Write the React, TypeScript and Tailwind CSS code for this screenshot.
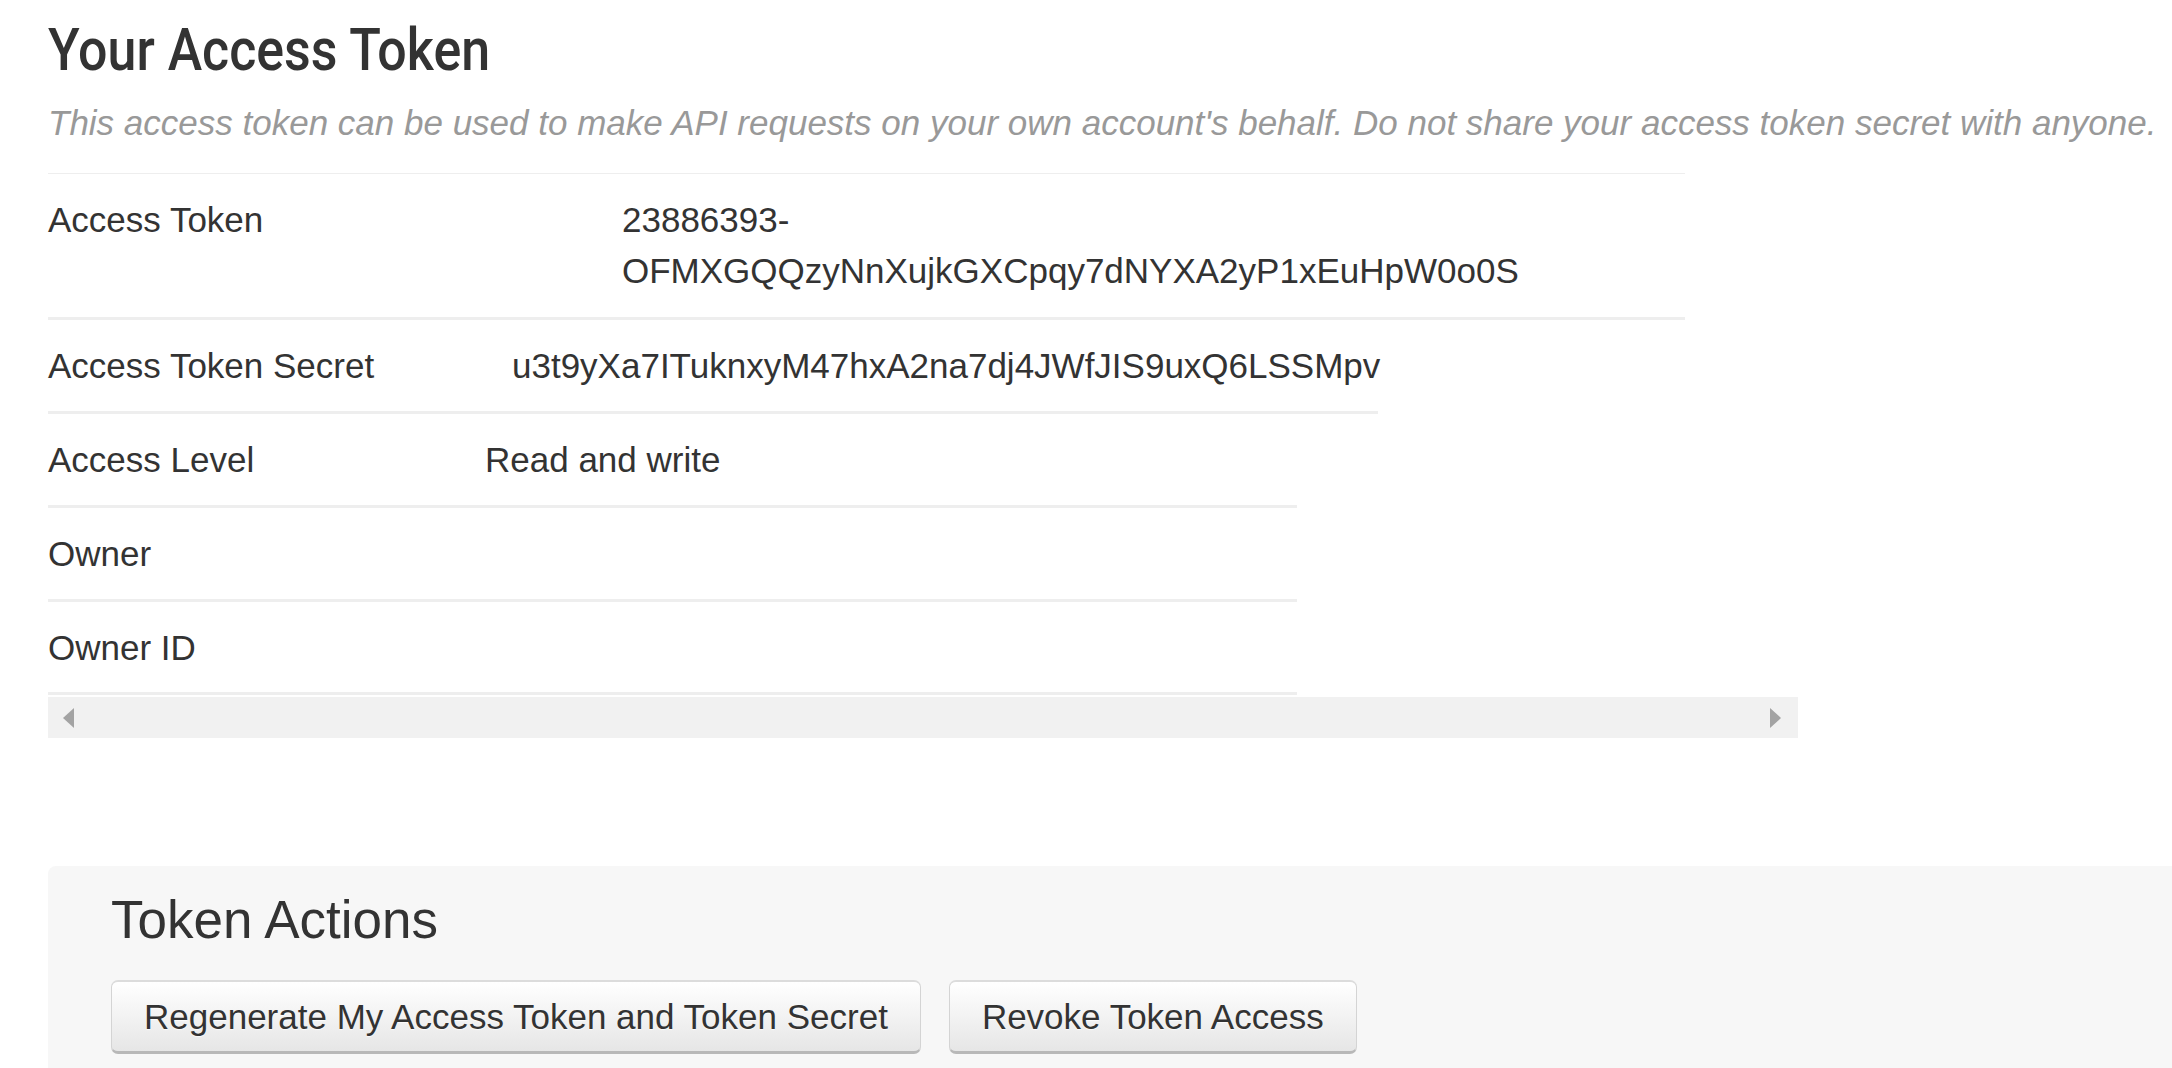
import React from 'react';

const rows = [
  {
    label: 'Access Token',
    value: (
      <>
        23886393-
        <br />
        OFMXGQQzyNnXujkGXCpqy7dNYXA2yP1xEuHpW0o0S
      </>
    ),
    rowClass: 'w-[1637px] pb-[21px]',
    labelClass: 'w-[574px]',
  },
  {
    label: 'Access Token Secret',
    value: 'u3t9yXa7ITuknxyM47hxA2na7dj4JWfJIS9uxQ6LSSMpv',
    rowClass: 'w-[1330px] pb-[20px]',
    labelClass: 'w-[464px]',
  },
  {
    label: 'Access Level',
    value: 'Read and write',
    rowClass: 'w-[1249px] pb-[20px]',
    labelClass: 'w-[437px]',
  },
  { label: 'Owner', value: '', rowClass: 'w-[1249px] pb-[20px]', labelClass: 'w-[437px]' },
  { label: 'Owner ID', value: '', rowClass: 'w-[1249px] pb-[19px]', labelClass: 'w-[437px]' },
];

function ScrollArrow({ dir }: { dir: 'left' | 'right' }) {
  return (
    <svg width="11" height="20" viewBox="0 0 11 20">
      {dir === 'left' ? (
        <polygon points="11,0 0,10 11,20" fill="#a3a3a3" />
      ) : (
        <polygon points="0,0 11,10 0,20" fill="#a3a3a3" />
      )}
    </svg>
  );
}

export default function App() {
  return (
    <div className="min-h-screen bg-white pl-[48px] overflow-hidden text-[#333] font-['Liberation_Sans',Arial,sans-serif]">
      <h1 className="pt-[21px] h-[79px] text-[59px] leading-[58px] font-medium font-['Roboto',sans-serif] whitespace-nowrap">
        <span className="inline-block origin-left scale-x-[0.88]">Your Access Token</span>
      </h1>

      <p className="mt-[18px] text-[35px] leading-[51px] italic text-[#999] whitespace-nowrap">
        This access token can be used to make API requests on your own account's behalf. Do not share your access token secret with anyone.
      </p>

      <div className="mt-[25px] w-[1750px]">
        <div className="w-[1637px] border-t border-[#eeeeee]" />
        {rows.map((row) => (
          <div
            key={row.label}
            className={`flex pt-[20px] border-b-[3px] border-[#eeeeee] text-[35px] leading-[51px] ${row.rowClass}`}
          >
            <div className={`shrink-0 ${row.labelClass}`}>{row.label}</div>
            <div className="whitespace-nowrap">{row.value}</div>
          </div>
        ))}
        <div className="h-[41px] mt-[2px] bg-[#f1f1f1] flex items-center justify-between pl-[15px] pr-[17px]">
          <ScrollArrow dir="left" />
          <ScrollArrow dir="right" />
        </div>
      </div>

      <section className="mt-[128px] bg-[#f7f7f7] rounded-tl-[8px] pl-[63px] pt-[26px] pb-[60px]">
        <h2 className="text-[53px] leading-[56px] text-[#333]">Token Actions</h2>
        <div className="mt-[32px] flex gap-[28px]">
          <button className="px-[32px] py-[10px] text-[35px] leading-[49px] text-[#333] bg-linear-to-b from-white to-[#e6e6e6] border border-[#d4d4d4] border-t-2 border-t-[#dcdcdc] border-b-[3px] border-b-[#b8b8b8] rounded-[7px] [text-shadow:0_1px_1px_rgba(255,255,255,0.75)] whitespace-nowrap">
            Regenerate My Access Token and Token Secret
          </button>
          <button className="px-[32px] py-[10px] text-[35px] leading-[49px] text-[#333] bg-linear-to-b from-white to-[#e6e6e6] border border-[#d4d4d4] border-t-2 border-t-[#dcdcdc] border-b-[3px] border-b-[#b8b8b8] rounded-[7px] [text-shadow:0_1px_1px_rgba(255,255,255,0.75)] whitespace-nowrap">
            Revoke Token Access
          </button>
        </div>
      </section>
    </div>
  );
}
